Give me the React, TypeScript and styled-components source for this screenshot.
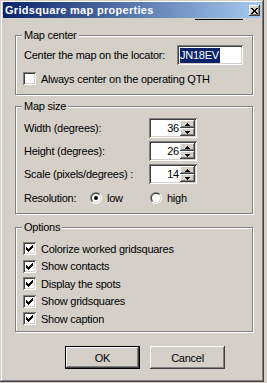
import React from 'react';
import styled, { createGlobalStyle } from 'styled-components';

const Global = createGlobalStyle`
  html, body { margin: 0; padding: 0; background: #d4d0c8; }
  body { font-family: "Liberation Sans", Arial, sans-serif; font-size: 11px; letter-spacing: -0.25px; color: #000; }
  * { box-sizing: border-box; }
`;

const Window = styled.div`
  width: 264px;
  height: 382px;
  background: #d4d0c8;
  box-shadow: inset -1px -1px #404040, inset 1px 1px #d4d0c8, inset -2px -2px #808080, inset 2px 2px #ffffff;
  padding: 2px 3px 0 3px;
  display: flex;
  flex-direction: column;
`;

const TitleBar = styled.div`
  height: 16px;
  background: linear-gradient(to right, #0a246a, #a6caf0);
  display: flex;
  align-items: center;
  justify-content: space-between;
  padding: 0 1px 0 2px;
`;

const TitleText = styled.span`
  color: #fff;
  font-weight: bold;
  font-size: 11px;
  letter-spacing: 0.3px;
  line-height: 16px;
  white-space: nowrap;
`;

const CloseButton = styled.div`
  width: 11px;
  height: 11px;
  background: #d4d0c8;
  box-shadow: inset -1px -1px #404040, inset 1px 1px #ffffff, inset -2px -2px #808080;
  display: flex;
  align-items: center;
  justify-content: center;
  margin-top: 1px;
`;

const TitleRule = styled.div`
  height: 1px;
  width: 48px;
  margin: 1px 0 0 192px;
  background: #000;
`;

const Content = styled.div`
  padding: 0 0 0 12px;
  display: flex;
  flex-direction: column;
`;

const Group = styled.div<{ $top: number; $height: number; $padTop: number }>`
  position: relative;
  width: 238px;
  height: ${p => p.$height}px;
  margin-top: ${p => p.$top}px;
  padding: ${p => p.$padTop}px 0 0 8px;
  border: 1px solid #808080;
  box-shadow: inset 1px 1px #ffffff, 1px 1px #ffffff;
  display: flex;
  flex-direction: column;
`;

const Legend = styled.span`
  position: absolute;
  top: -7px;
  left: 6px;
  padding: 0 2px;
  line-height: 13px;
  background: #d4d0c8;
`;

const LocatorRow = styled.div`
  display: grid;
  grid-template-columns: 153px 66px;
  align-items: center;
  height: 20px;
`;

const Label = styled.span`
  white-space: nowrap;
`;

const Field = styled.div<{ $w: number }>`
  width: ${p => p.$w}px;
  height: 20px;
  background: #fff;
  box-shadow: inset 1px 1px #808080, inset -1px -1px #ffffff, inset 2px 2px #404040, inset -2px -2px #d4d0c8;
  display: flex;
  align-items: center;
  padding: 0 2px 0 3px;
`;

const Selected = styled.span`
  background: #0a246a;
  color: #fff;
  line-height: 15px;
  padding: 0 1px 0 0;
`;

const CheckRow = styled.div<{ $top?: number; $h?: number }>`
  display: flex;
  align-items: center;
  gap: 5px;
  margin-left: -1px;
  margin-top: ${p => p.$top ?? 0}px;
  height: ${p => p.$h ?? 13}px;
`;

const Box = styled.div`
  width: 13px;
  height: 13px;
  flex: none;
  background: #fff;
  box-shadow: inset 1px 1px #808080, inset -1px -1px #ffffff, inset 2px 2px #404040, inset -2px -2px #d4d0c8;
  display: flex;
  align-items: center;
  justify-content: center;
`;

const SpinRow = styled.div<{ $top: number }>`
  display: grid;
  grid-template-columns: 125px 48px;
  align-items: center;
  height: 20px;
  margin-top: ${p => p.$top}px;
`;

const SpinField = styled.div`
  width: 48px;
  height: 20px;
  background: #fff;
  box-shadow: inset 1px 1px #808080, inset -1px -1px #ffffff, inset 2px 2px #404040, inset -2px -2px #d4d0c8;
  display: flex;
  padding: 2px;
`;

const SpinValue = styled.span`
  flex: 1;
  text-align: right;
  line-height: 16px;
  padding-right: 1px;
`;

const SpinButtons = styled.div`
  width: 15px;
  display: flex;
  flex-direction: column;
`;

const SpinButton = styled.div`
  height: 8px;
  background: #d4d0c8;
  box-shadow: inset -1px -1px #404040, inset 1px 1px #ffffff, inset -2px -2px #808080;
  display: flex;
  align-items: center;
  justify-content: center;
`;

const RadioRow = styled.div`
  display: flex;
  align-items: center;
  height: 13px;
  margin-top: 7px;
`;

const RadioLabel = styled.span<{ $w: number }>`
  width: ${p => p.$w}px;
  white-space: nowrap;
`;

const RadioOption = styled.div<{ $w: number }>`
  width: ${p => p.$w}px;
  display: flex;
  align-items: center;
  gap: 5px;
`;

const RadioOuter = styled.div`
  width: 12px;
  height: 12px;
  flex: none;
  border-radius: 50%;
  padding: 1px;
  background: linear-gradient(135deg, #808080 50%, #ffffff 50%);
`;

const RadioInner = styled.div`
  width: 10px;
  height: 10px;
  border-radius: 50%;
  padding: 1px;
  background: linear-gradient(135deg, #404040 50%, #d4d0c8 50%);
`;

const RadioFace = styled.div`
  width: 8px;
  height: 8px;
  border-radius: 50%;
  background: #fff;
  display: flex;
  align-items: center;
  justify-content: center;
`;

const Dot = styled.div`
  width: 4px;
  height: 4px;
  border-radius: 50%;
  background: #000;
`;

const ButtonBar = styled.div`
  display: flex;
  gap: 10px;
  margin-top: 14px;
  padding-left: 50px;
`;

const PushButton = styled.div<{ $default?: boolean }>`
  width: 75px;
  height: 23px;
  display: flex;
  align-items: center;
  justify-content: center;
  background: #d4d0c8;
  box-shadow: ${p =>
    p.$default
      ? 'inset 0 0 0 1px #000, inset -2px -2px #404040, inset 2px 2px #ffffff, inset -3px -3px #808080'
      : 'inset -1px -1px #404040, inset 1px 1px #ffffff, inset -2px -2px #808080'};
`;

const Check = () => (
  <svg width="7" height="7" viewBox="0 0 7 7" shapeRendering="crispEdges">
    <path d="M0 2h1v3H0zM1 3h1v3H1zM2 4h1v3H2zM3 3h1v3H3zM4 2h1v3H4zM5 1h1v3H5zM6 0h1v3H6z" fill="#000" />
  </svg>
);

const CheckBox = ({ checked }: { checked?: boolean }) => <Box>{checked && <Check />}</Box>;

const Radio = ({ checked }: { checked?: boolean }) => (
  <RadioOuter>
    <RadioInner>
      <RadioFace>{checked && <Dot />}</RadioFace>
    </RadioInner>
  </RadioOuter>
);

const Arrow = ({ up }: { up?: boolean }) => (
  <svg width="5" height="3" viewBox="0 0 5 3" shapeRendering="crispEdges">
    <path d={up ? 'M2 0h1v1h1v1h1v1H0V2h1V1h1z' : 'M0 0h5v1H4v1H3v1H2V2H1V1H0z'} fill="#000" />
  </svg>
);

const Spin = ({ value }: { value: string }) => (
  <SpinField>
    <SpinValue>{value}</SpinValue>
    <SpinButtons>
      <SpinButton><Arrow up /></SpinButton>
      <SpinButton><Arrow /></SpinButton>
    </SpinButtons>
  </SpinField>
);

const options = [
  'Colorize worked gridsquares',
  'Show contacts',
  'Display the spots',
  'Show gridsquares',
  'Show caption',
];

export default function App() {
  return (
    <>
      <Global />
      <Window>
        <TitleBar>
          <TitleText>Gridsquare map properties</TitleText>
          <CloseButton>
            <svg width="7" height="6" viewBox="0 0 7 6" shapeRendering="crispEdges">
              <path d="M0 0h2v1h1v1h1V1h1V0h2v1H6v1H5v2h1v1h1v1H5V5H4V4H3v1H2v1H0V5h1V4h1V2H1V1H0z" fill="#000" />
            </svg>
          </CloseButton>
        </TitleBar>
        <TitleRule />
        <Content>
          <Group $top={15} $height={60} $padTop={9}>
            <Legend>Map center</Legend>
            <LocatorRow>
              <Label>Center the map on the locator:</Label>
              <Field $w={66}><Selected>JN18EV</Selected></Field>
            </LocatorRow>
            <CheckRow $top={7}>
              <CheckBox />
              <Label>Always center on the operating QTH</Label>
            </CheckRow>
          </Group>
          <Group $top={11} $height={108} $padTop={11}>
            <Legend>Map size</Legend>
            <SpinRow $top={0}>
              <Label>Width (degrees):</Label>
              <Spin value="36" />
            </SpinRow>
            <SpinRow $top={3}>
              <Label>Height (degrees):</Label>
              <Spin value="26" />
            </SpinRow>
            <SpinRow $top={3}>
              <Label>Scale (pixels/degrees) :</Label>
              <Spin value="14" />
            </SpinRow>
            <RadioRow>
              <RadioLabel $w={66}>Resolution:</RadioLabel>
              <RadioOption $w={60}><Radio checked /><span>low</span></RadioOption>
              <RadioOption $w={60}><Radio /><span>high</span></RadioOption>
            </RadioRow>
          </Group>
          <Group $top={13} $height={105} $padTop={14}>
            <Legend>Options</Legend>
            {options.map((o, i) => (
              <CheckRow key={o} $top={i === 0 ? 0 : 4.5}>
                <CheckBox checked />
                <Label>{o}</Label>
              </CheckRow>
            ))}
          </Group>
          <ButtonBar>
            <PushButton $default>OK</PushButton>
            <PushButton>Cancel</PushButton>
          </ButtonBar>
        </Content>
      </Window>
    </>
  );
}
